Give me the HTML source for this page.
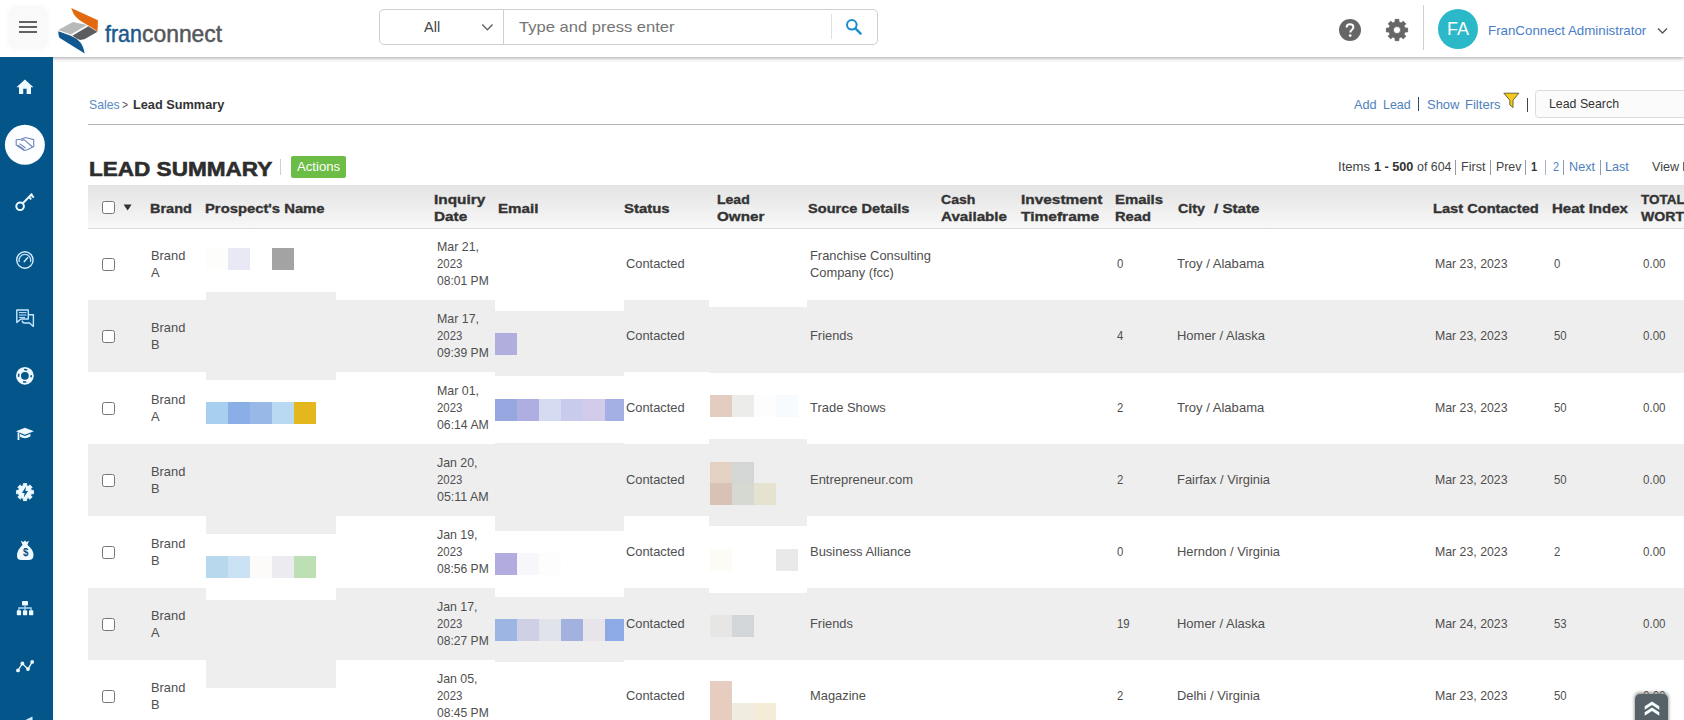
<!DOCTYPE html>
<html><head><meta charset="utf-8"><title>Lead Summary</title>
<style>
html,body{margin:0;padding:0;width:1684px;height:720px;overflow:hidden;}
body{width:1684px;height:720px;overflow:hidden;background:#fff;position:relative;font-family:"Liberation Sans",sans-serif;}
.t{position:absolute;white-space:nowrap;line-height:1;transform-origin:0 0;display:block;}
.r{position:absolute;}
svg{position:absolute;overflow:visible;}
.cb{position:absolute;width:11px;height:11px;border:1px solid #767676;border-radius:2.5px;background:#fff;}
#app{position:absolute;left:0;top:0;width:1684px;height:720px;overflow:hidden;background:#fff;}
</style></head><body><div id="app">
<div class="r" style="left:88px;top:300px;width:1596px;height:72px;background:#eeeeee;"></div>
<div class="r" style="left:88px;top:444px;width:1596px;height:72px;background:#eeeeee;"></div>
<div class="r" style="left:88px;top:588px;width:1596px;height:72px;background:#eeeeee;"></div>
<div class="r" style="left:709px;top:372px;width:975px;height:1px;background:#eeeeee;"></div>
<div class="r" style="left:206px;top:292px;width:130px;height:88px;background:#eeeeee;"></div>
<div class="r" style="left:206px;top:444px;width:130px;height:90px;background:#eeeeee;"></div>
<div class="r" style="left:206px;top:534px;width:130px;height:66px;background:#fff;"></div>
<div class="r" style="left:206px;top:600px;width:130px;height:88px;background:#eeeeee;"></div>
<div class="r" style="left:495px;top:300px;width:129px;height:11px;background:#fff;"></div>
<div class="r" style="left:495px;top:372px;width:129px;height:4px;background:#eeeeee;"></div>
<div class="r" style="left:495px;top:443px;width:129px;height:88px;background:#eeeeee;"></div>
<div class="r" style="left:495px;top:531px;width:129px;height:66px;background:#fff;"></div>
<div class="r" style="left:495px;top:660px;width:129px;height:2px;background:#eeeeee;"></div>
<div class="r" style="left:709px;top:300px;width:98px;height:7px;background:#fff;"></div>
<div class="r" style="left:709px;top:439px;width:98px;height:87px;background:#eeeeee;"></div>
<div class="r" style="left:709px;top:526px;width:98px;height:67px;background:#fff;"></div>
<div class="r" style="left:88px;top:185px;width:1596px;height:43px;background:linear-gradient(#e4e4e4,#ececec 45%,#f8f8f8);border-bottom:1px solid #dcdcdc"></div>
<div class="r" style="left:206px;top:248px;width:22px;height:22px;background:#fdfdfb;"></div>
<div class="r" style="left:228px;top:248px;width:22px;height:22px;background:#e8e9f4;"></div>
<div class="r" style="left:272px;top:248px;width:22px;height:22px;background:#a3a3a3;"></div>
<div class="r" style="left:206px;top:402px;width:22px;height:22px;background:#a9cff0;"></div>
<div class="r" style="left:228px;top:402px;width:22px;height:22px;background:#8aaee6;"></div>
<div class="r" style="left:250px;top:402px;width:22px;height:22px;background:#98b8e8;"></div>
<div class="r" style="left:272px;top:402px;width:22px;height:22px;background:#b9d8f1;"></div>
<div class="r" style="left:294px;top:402px;width:22px;height:22px;background:#e5b71e;"></div>
<div class="r" style="left:206px;top:556px;width:22px;height:22px;background:#b8d8ee;"></div>
<div class="r" style="left:228px;top:556px;width:22px;height:22px;background:#cbe2f5;"></div>
<div class="r" style="left:250px;top:556px;width:22px;height:22px;background:#fdfbfa;"></div>
<div class="r" style="left:272px;top:556px;width:22px;height:22px;background:#ebebf0;"></div>
<div class="r" style="left:294px;top:556px;width:22px;height:22px;background:#bce0b4;"></div>
<div class="r" style="left:495px;top:333px;width:22px;height:22px;background:#b1aede;"></div>
<div class="r" style="left:495px;top:399px;width:22px;height:22px;background:#96a6df;"></div>
<div class="r" style="left:517px;top:399px;width:22px;height:22px;background:#aeaee2;"></div>
<div class="r" style="left:539px;top:399px;width:22px;height:22px;background:#d5dcf2;"></div>
<div class="r" style="left:561px;top:399px;width:22px;height:22px;background:#c9cbec;"></div>
<div class="r" style="left:583px;top:399px;width:22px;height:22px;background:#d3cbea;"></div>
<div class="r" style="left:605px;top:399px;width:19px;height:22px;background:#a4b0e4;"></div>
<div class="r" style="left:495px;top:553px;width:22px;height:22px;background:#b1abe0;"></div>
<div class="r" style="left:517px;top:553px;width:22px;height:22px;background:#f7f6fb;"></div>
<div class="r" style="left:539px;top:553px;width:22px;height:22px;background:#fdfdfe;"></div>
<div class="r" style="left:495px;top:619px;width:22px;height:22px;background:#9db5e3;"></div>
<div class="r" style="left:517px;top:619px;width:22px;height:22px;background:#cfcfe6;"></div>
<div class="r" style="left:539px;top:619px;width:22px;height:22px;background:#e0e4ea;"></div>
<div class="r" style="left:561px;top:619px;width:22px;height:22px;background:#a3b1df;"></div>
<div class="r" style="left:583px;top:619px;width:22px;height:22px;background:#e7e5ea;"></div>
<div class="r" style="left:605px;top:619px;width:19px;height:22px;background:#8eaae6;"></div>
<div class="r" style="left:710px;top:395px;width:22px;height:22px;background:#e3cdc0;"></div>
<div class="r" style="left:732px;top:395px;width:22px;height:22px;background:#ececea;"></div>
<div class="r" style="left:754px;top:395px;width:22px;height:22px;background:#fdfdfd;"></div>
<div class="r" style="left:776px;top:395px;width:22px;height:22px;background:#f8fbfd;"></div>
<div class="r" style="left:710px;top:462px;width:22px;height:22px;background:#e3d2c4;"></div>
<div class="r" style="left:732px;top:462px;width:22px;height:22px;background:#d4d6d5;"></div>
<div class="r" style="left:710px;top:483px;width:22px;height:22px;background:#d8c1b5;"></div>
<div class="r" style="left:732px;top:483px;width:22px;height:22px;background:#d6d9d2;"></div>
<div class="r" style="left:754px;top:483px;width:22px;height:22px;background:#e5e2cf;"></div>
<div class="r" style="left:710px;top:549px;width:22px;height:22px;background:#fcfbf6;"></div>
<div class="r" style="left:776px;top:549px;width:22px;height:22px;background:#e9e9e9;"></div>
<div class="r" style="left:710px;top:615px;width:22px;height:22px;background:#e6e7e4;"></div>
<div class="r" style="left:732px;top:615px;width:22px;height:22px;background:#d2d6d9;"></div>
<div class="r" style="left:710px;top:681px;width:22px;height:22px;background:#e6cdbf;"></div>
<div class="r" style="left:710px;top:703px;width:22px;height:22px;background:#e6cdbf;"></div>
<div class="r" style="left:732px;top:703px;width:22px;height:22px;background:#f1ece0;"></div>
<div class="r" style="left:754px;top:703px;width:22px;height:22px;background:#f4ecd6;"></div>
<span class="t" style="left:149.50px;top:202.10px;font-size:13px;font-weight:700;color:#333;transform:scaleX(1.1130);-webkit-text-stroke:0.35px #333;">Brand</span>
<span class="t" style="left:204.50px;top:202.10px;font-size:13px;font-weight:700;color:#333;transform:scaleX(1.1385);-webkit-text-stroke:0.35px #333;">Prospect&#x27;s Name</span>
<span class="t" style="left:434.30px;top:193.30px;font-size:13px;font-weight:700;color:#333;transform:scaleX(1.1839);-webkit-text-stroke:0.35px #333;">Inquiry</span>
<span class="t" style="left:434.30px;top:210.00px;font-size:13px;font-weight:700;color:#333;transform:scaleX(1.1783);-webkit-text-stroke:0.35px #333;">Date</span>
<span class="t" style="left:498.20px;top:202.10px;font-size:13px;font-weight:700;color:#333;transform:scaleX(1.1648);-webkit-text-stroke:0.35px #333;">Email</span>
<span class="t" style="left:624.20px;top:202.10px;font-size:13px;font-weight:700;color:#333;transform:scaleX(1.1453);-webkit-text-stroke:0.35px #333;">Status</span>
<span class="t" style="left:717.30px;top:193.30px;font-size:13px;font-weight:700;color:#333;transform:scaleX(1.0778);-webkit-text-stroke:0.35px #333;">Lead</span>
<span class="t" style="left:717.30px;top:210.00px;font-size:13px;font-weight:700;color:#333;transform:scaleX(1.1693);-webkit-text-stroke:0.35px #333;">Owner</span>
<span class="t" style="left:808.30px;top:202.10px;font-size:13px;font-weight:700;color:#333;transform:scaleX(1.1228);-webkit-text-stroke:0.35px #333;">Source Details</span>
<span class="t" style="left:941.00px;top:193.30px;font-size:13px;font-weight:700;color:#333;transform:scaleX(1.0822);-webkit-text-stroke:0.35px #333;">Cash</span>
<span class="t" style="left:941.00px;top:210.00px;font-size:13px;font-weight:700;color:#333;transform:scaleX(1.1661);-webkit-text-stroke:0.35px #333;">Available</span>
<span class="t" style="left:1020.60px;top:193.30px;font-size:13px;font-weight:700;color:#333;transform:scaleX(1.1861);-webkit-text-stroke:0.35px #333;">Investment</span>
<span class="t" style="left:1020.60px;top:210.00px;font-size:13px;font-weight:700;color:#333;transform:scaleX(1.1937);-webkit-text-stroke:0.35px #333;">Timeframe</span>
<span class="t" style="left:1114.60px;top:193.30px;font-size:13px;font-weight:700;color:#333;transform:scaleX(1.1452);-webkit-text-stroke:0.35px #333;">Emails</span>
<span class="t" style="left:1114.60px;top:210.00px;font-size:13px;font-weight:700;color:#333;transform:scaleX(1.1294);-webkit-text-stroke:0.35px #333;">Read</span>
<span class="t" style="left:1178.00px;top:202.10px;font-size:13px;font-weight:700;color:#333;transform:scaleX(1.0994);-webkit-text-stroke:0.35px #333;">City</span>
<span class="t" style="left:1213.50px;top:202.10px;font-size:13px;font-weight:700;color:#333;transform:scaleX(1.1664);-webkit-text-stroke:0.35px #333;">/ State</span>
<span class="t" style="left:1433.00px;top:202.10px;font-size:13px;font-weight:700;color:#333;transform:scaleX(1.1258);-webkit-text-stroke:0.35px #333;">Last Contacted</span>
<span class="t" style="left:1551.80px;top:202.10px;font-size:13px;font-weight:700;color:#333;transform:scaleX(1.1546);-webkit-text-stroke:0.35px #333;">Heat Index</span>
<span class="t" style="left:1640.70px;top:193.30px;font-size:13px;font-weight:700;color:#333;transform:scaleX(1.0399);-webkit-text-stroke:0.35px #333;">TOTAL</span>
<span class="t" style="left:1640.70px;top:210.00px;font-size:13px;font-weight:700;color:#333;transform:scaleX(1.0856);-webkit-text-stroke:0.35px #333;">WORTH</span>
<div class="cb" style="left:102px;top:201px"></div>
<svg style="left:123px;top:204px" width="10" height="8"><path d="M0.6 0.4 L8.6 0.4 L4.6 6.6 Z" fill="#333"/></svg>
<div class="cb" style="left:102px;top:258px"></div>
<span class="t" style="left:150.70px;top:249.00px;font-size:13px;color:#4f4f4f;transform:scaleX(0.9900);">Brand</span>
<span class="t" style="left:150.70px;top:266.00px;font-size:13px;color:#4f4f4f;transform:scaleX(0.9900);">A</span>
<span class="t" style="left:436.50px;top:240.10px;font-size:13px;color:#4f4f4f;transform:scaleX(0.9523);">Mar 21,</span>
<span class="t" style="left:436.50px;top:257.10px;font-size:13px;color:#4f4f4f;transform:scaleX(0.8750);">2023</span>
<span class="t" style="left:436.50px;top:274.10px;font-size:13px;color:#4f4f4f;transform:scaleX(0.9302);">08:01 PM</span>
<span class="t" style="left:626.40px;top:257.40px;font-size:13px;color:#4f4f4f;transform:scaleX(0.9900);">Contacted</span>
<span class="t" style="left:810.00px;top:249.00px;font-size:13px;color:#4f4f4f;transform:scaleX(0.9900);">Franchise Consulting</span>
<span class="t" style="left:810.00px;top:266.20px;font-size:13px;color:#4f4f4f;transform:scaleX(0.9900);">Company (fcc)</span>
<span class="t" style="left:1116.50px;top:257.40px;font-size:13px;color:#4f4f4f;transform:scaleX(0.8750);">0</span>
<span class="t" style="left:1176.90px;top:257.40px;font-size:13px;color:#4f4f4f;transform:scaleX(1.0036);">Troy / Alabama</span>
<span class="t" style="left:1434.80px;top:257.40px;font-size:13px;color:#4f4f4f;transform:scaleX(0.9465);">Mar 23, 2023</span>
<span class="t" style="left:1553.60px;top:257.40px;font-size:13px;color:#4f4f4f;transform:scaleX(0.8750);">0</span>
<span class="t" style="left:1642.60px;top:257.40px;font-size:13px;color:#4f4f4f;transform:scaleX(0.8914);">0.00</span>
<div class="cb" style="left:102px;top:330px"></div>
<span class="t" style="left:150.70px;top:321.00px;font-size:13px;color:#4f4f4f;transform:scaleX(0.9900);">Brand</span>
<span class="t" style="left:150.70px;top:338.00px;font-size:13px;color:#4f4f4f;transform:scaleX(0.9900);">B</span>
<span class="t" style="left:436.50px;top:312.10px;font-size:13px;color:#4f4f4f;transform:scaleX(0.9523);">Mar 17,</span>
<span class="t" style="left:436.50px;top:329.10px;font-size:13px;color:#4f4f4f;transform:scaleX(0.8750);">2023</span>
<span class="t" style="left:436.50px;top:346.10px;font-size:13px;color:#4f4f4f;transform:scaleX(0.9302);">09:39 PM</span>
<span class="t" style="left:626.40px;top:329.40px;font-size:13px;color:#4f4f4f;transform:scaleX(0.9900);">Contacted</span>
<span class="t" style="left:810.00px;top:329.40px;font-size:13px;color:#4f4f4f;transform:scaleX(0.9900);">Friends</span>
<span class="t" style="left:1116.50px;top:329.40px;font-size:13px;color:#4f4f4f;transform:scaleX(0.8750);">4</span>
<span class="t" style="left:1176.90px;top:329.40px;font-size:13px;color:#4f4f4f;transform:scaleX(0.9981);">Homer / Alaska</span>
<span class="t" style="left:1434.80px;top:329.40px;font-size:13px;color:#4f4f4f;transform:scaleX(0.9465);">Mar 23, 2023</span>
<span class="t" style="left:1553.60px;top:329.40px;font-size:13px;color:#4f4f4f;transform:scaleX(0.8750);">50</span>
<span class="t" style="left:1642.60px;top:329.40px;font-size:13px;color:#4f4f4f;transform:scaleX(0.8914);">0.00</span>
<div class="cb" style="left:102px;top:402px"></div>
<span class="t" style="left:150.70px;top:393.00px;font-size:13px;color:#4f4f4f;transform:scaleX(0.9900);">Brand</span>
<span class="t" style="left:150.70px;top:410.00px;font-size:13px;color:#4f4f4f;transform:scaleX(0.9900);">A</span>
<span class="t" style="left:436.50px;top:384.10px;font-size:13px;color:#4f4f4f;transform:scaleX(0.9523);">Mar 01,</span>
<span class="t" style="left:436.50px;top:401.10px;font-size:13px;color:#4f4f4f;transform:scaleX(0.8750);">2023</span>
<span class="t" style="left:436.50px;top:418.10px;font-size:13px;color:#4f4f4f;transform:scaleX(0.9424);">06:14 AM</span>
<span class="t" style="left:626.40px;top:401.40px;font-size:13px;color:#4f4f4f;transform:scaleX(0.9900);">Contacted</span>
<span class="t" style="left:810.00px;top:401.40px;font-size:13px;color:#4f4f4f;transform:scaleX(0.9963);">Trade Shows</span>
<span class="t" style="left:1116.50px;top:401.40px;font-size:13px;color:#4f4f4f;transform:scaleX(0.8750);">2</span>
<span class="t" style="left:1176.90px;top:401.40px;font-size:13px;color:#4f4f4f;transform:scaleX(1.0036);">Troy / Alabama</span>
<span class="t" style="left:1434.80px;top:401.40px;font-size:13px;color:#4f4f4f;transform:scaleX(0.9465);">Mar 23, 2023</span>
<span class="t" style="left:1553.60px;top:401.40px;font-size:13px;color:#4f4f4f;transform:scaleX(0.8750);">50</span>
<span class="t" style="left:1642.60px;top:401.40px;font-size:13px;color:#4f4f4f;transform:scaleX(0.8914);">0.00</span>
<div class="cb" style="left:102px;top:474px"></div>
<span class="t" style="left:150.70px;top:465.00px;font-size:13px;color:#4f4f4f;transform:scaleX(0.9900);">Brand</span>
<span class="t" style="left:150.70px;top:482.00px;font-size:13px;color:#4f4f4f;transform:scaleX(0.9900);">B</span>
<span class="t" style="left:436.50px;top:456.10px;font-size:13px;color:#4f4f4f;transform:scaleX(0.9510);">Jan 20,</span>
<span class="t" style="left:436.50px;top:473.10px;font-size:13px;color:#4f4f4f;transform:scaleX(0.8750);">2023</span>
<span class="t" style="left:436.50px;top:490.10px;font-size:13px;color:#4f4f4f;transform:scaleX(0.9592);">05:11 AM</span>
<span class="t" style="left:626.40px;top:473.40px;font-size:13px;color:#4f4f4f;transform:scaleX(0.9900);">Contacted</span>
<span class="t" style="left:810.00px;top:473.40px;font-size:13px;color:#4f4f4f;transform:scaleX(0.9969);">Entrepreneur.com</span>
<span class="t" style="left:1116.50px;top:473.40px;font-size:13px;color:#4f4f4f;transform:scaleX(0.8750);">2</span>
<span class="t" style="left:1176.90px;top:473.40px;font-size:13px;color:#4f4f4f;transform:scaleX(0.9925);">Fairfax / Virginia</span>
<span class="t" style="left:1434.80px;top:473.40px;font-size:13px;color:#4f4f4f;transform:scaleX(0.9465);">Mar 23, 2023</span>
<span class="t" style="left:1553.60px;top:473.40px;font-size:13px;color:#4f4f4f;transform:scaleX(0.8750);">50</span>
<span class="t" style="left:1642.60px;top:473.40px;font-size:13px;color:#4f4f4f;transform:scaleX(0.8914);">0.00</span>
<div class="cb" style="left:102px;top:546px"></div>
<span class="t" style="left:150.70px;top:537.00px;font-size:13px;color:#4f4f4f;transform:scaleX(0.9900);">Brand</span>
<span class="t" style="left:150.70px;top:554.00px;font-size:13px;color:#4f4f4f;transform:scaleX(0.9900);">B</span>
<span class="t" style="left:436.50px;top:528.10px;font-size:13px;color:#4f4f4f;transform:scaleX(0.9510);">Jan 19,</span>
<span class="t" style="left:436.50px;top:545.10px;font-size:13px;color:#4f4f4f;transform:scaleX(0.8750);">2023</span>
<span class="t" style="left:436.50px;top:562.10px;font-size:13px;color:#4f4f4f;transform:scaleX(0.9302);">08:56 PM</span>
<span class="t" style="left:626.40px;top:545.40px;font-size:13px;color:#4f4f4f;transform:scaleX(0.9900);">Contacted</span>
<span class="t" style="left:810.00px;top:545.40px;font-size:13px;color:#4f4f4f;transform:scaleX(0.9970);">Business Alliance</span>
<span class="t" style="left:1116.50px;top:545.40px;font-size:13px;color:#4f4f4f;transform:scaleX(0.8750);">0</span>
<span class="t" style="left:1176.90px;top:545.40px;font-size:13px;color:#4f4f4f;transform:scaleX(0.9922);">Herndon / Virginia</span>
<span class="t" style="left:1434.80px;top:545.40px;font-size:13px;color:#4f4f4f;transform:scaleX(0.9465);">Mar 23, 2023</span>
<span class="t" style="left:1553.60px;top:545.40px;font-size:13px;color:#4f4f4f;transform:scaleX(0.8750);">2</span>
<span class="t" style="left:1642.60px;top:545.40px;font-size:13px;color:#4f4f4f;transform:scaleX(0.8914);">0.00</span>
<div class="cb" style="left:102px;top:618px"></div>
<span class="t" style="left:150.70px;top:609.00px;font-size:13px;color:#4f4f4f;transform:scaleX(0.9900);">Brand</span>
<span class="t" style="left:150.70px;top:626.00px;font-size:13px;color:#4f4f4f;transform:scaleX(0.9900);">A</span>
<span class="t" style="left:436.50px;top:600.10px;font-size:13px;color:#4f4f4f;transform:scaleX(0.9510);">Jan 17,</span>
<span class="t" style="left:436.50px;top:617.10px;font-size:13px;color:#4f4f4f;transform:scaleX(0.8750);">2023</span>
<span class="t" style="left:436.50px;top:634.10px;font-size:13px;color:#4f4f4f;transform:scaleX(0.9302);">08:27 PM</span>
<span class="t" style="left:626.40px;top:617.40px;font-size:13px;color:#4f4f4f;transform:scaleX(0.9900);">Contacted</span>
<span class="t" style="left:810.00px;top:617.40px;font-size:13px;color:#4f4f4f;transform:scaleX(0.9900);">Friends</span>
<span class="t" style="left:1116.50px;top:617.40px;font-size:13px;color:#4f4f4f;transform:scaleX(0.8750);">19</span>
<span class="t" style="left:1176.90px;top:617.40px;font-size:13px;color:#4f4f4f;transform:scaleX(0.9981);">Homer / Alaska</span>
<span class="t" style="left:1434.80px;top:617.40px;font-size:13px;color:#4f4f4f;transform:scaleX(0.9465);">Mar 24, 2023</span>
<span class="t" style="left:1553.60px;top:617.40px;font-size:13px;color:#4f4f4f;transform:scaleX(0.8750);">53</span>
<span class="t" style="left:1642.60px;top:617.40px;font-size:13px;color:#4f4f4f;transform:scaleX(0.8914);">0.00</span>
<div class="cb" style="left:102px;top:690px"></div>
<span class="t" style="left:150.70px;top:681.00px;font-size:13px;color:#4f4f4f;transform:scaleX(0.9900);">Brand</span>
<span class="t" style="left:150.70px;top:698.00px;font-size:13px;color:#4f4f4f;transform:scaleX(0.9900);">B</span>
<span class="t" style="left:436.50px;top:672.10px;font-size:13px;color:#4f4f4f;transform:scaleX(0.9510);">Jan 05,</span>
<span class="t" style="left:436.50px;top:689.10px;font-size:13px;color:#4f4f4f;transform:scaleX(0.8750);">2023</span>
<span class="t" style="left:436.50px;top:706.10px;font-size:13px;color:#4f4f4f;transform:scaleX(0.9302);">08:45 PM</span>
<span class="t" style="left:626.40px;top:689.40px;font-size:13px;color:#4f4f4f;transform:scaleX(0.9900);">Contacted</span>
<span class="t" style="left:810.00px;top:689.40px;font-size:13px;color:#4f4f4f;transform:scaleX(0.9900);">Magazine</span>
<span class="t" style="left:1116.50px;top:689.40px;font-size:13px;color:#4f4f4f;transform:scaleX(0.8750);">2</span>
<span class="t" style="left:1176.90px;top:689.40px;font-size:13px;color:#4f4f4f;transform:scaleX(0.9928);">Delhi / Virginia</span>
<span class="t" style="left:1434.80px;top:689.40px;font-size:13px;color:#4f4f4f;transform:scaleX(0.9465);">Mar 23, 2023</span>
<span class="t" style="left:1553.60px;top:689.40px;font-size:13px;color:#4f4f4f;transform:scaleX(0.8750);">50</span>
<span class="t" style="left:1642.60px;top:689.40px;font-size:13px;color:#4f4f4f;transform:scaleX(0.8914);">0.00</span>
<span class="t" style="left:88.80px;top:158.02px;font-size:21px;font-weight:700;color:#2d2d2d;transform:scaleX(1.0731);-webkit-text-stroke:0.6px #2d2d2d;">LEAD SUMMARY</span>
<div class="r" style="left:280px;top:159px;width:1px;height:16px;background:#d0d0d0;"></div>
<div class="r" style="left:291px;top:156px;width:55px;height:22px;background:#6cbd45;border-radius:2px"></div>
<span class="t" style="left:296.80px;top:159.87px;font-size:13.5px;color:#fff;transform:scaleX(0.9758);">Actions</span>
<span class="t" style="left:1337.60px;top:160.00px;font-size:13px;color:#444;transform:scaleX(1.0100);">Items</span>
<span class="t" style="left:1373.60px;top:160.00px;font-size:13px;font-weight:700;color:#333;transform:scaleX(0.9736);">1 - 500</span>
<span class="t" style="left:1416.60px;top:160.00px;font-size:13px;color:#444;transform:scaleX(0.9519);">of 604</span>
<div class="r" style="left:1455.3px;top:160px;width:1px;height:15px;background:#999;"></div>
<div class="r" style="left:1490.3px;top:160px;width:1px;height:15px;background:#999;"></div>
<div class="r" style="left:1525px;top:160px;width:1px;height:15px;background:#999;"></div>
<span class="t" style="left:1461.20px;top:160.00px;font-size:13px;color:#444;transform:scaleX(0.9656);">First</span>
<span class="t" style="left:1495.60px;top:160.00px;font-size:13px;color:#444;transform:scaleX(0.9503);">Prev</span>
<span class="t" style="left:1530.80px;top:160.00px;font-size:13px;font-weight:700;color:#333;transform:scaleX(0.8438);">1</span>
<div class="r" style="left:1545px;top:160px;width:1px;height:15px;background:#a9b3c4;"></div>
<div class="r" style="left:1563.4px;top:160px;width:1px;height:15px;background:#8a9bb8;"></div>
<div class="r" style="left:1599.5px;top:160px;width:1px;height:15px;background:#8a9bb8;"></div>
<span class="t" style="left:1552.90px;top:160.00px;font-size:13px;color:#4f81bd;transform:scaleX(0.8438);">2</span>
<span class="t" style="left:1569.00px;top:160.00px;font-size:13px;color:#4f81bd;transform:scaleX(0.9727);">Next</span>
<span class="t" style="left:1605.00px;top:160.00px;font-size:13px;color:#4f81bd;transform:scaleX(0.9687);">Last</span>
<span class="t" style="left:1651.90px;top:160.00px;font-size:13px;color:#444;transform:scaleX(0.9699);">View</span>
<div class="r" style="left:1682.6px;top:161.5px;width:1.4px;height:9.5px;background:#6b6b4a;"></div>
<span class="t" style="left:88.60px;top:98.40px;font-size:13px;color:#5a8abf;transform:scaleX(0.9410);">Sales</span>
<span class="t" style="left:122.00px;top:98.64px;font-size:12px;color:#555;transform:scaleX(0.8561);">&gt;</span>
<span class="t" style="left:132.50px;top:97.80px;font-size:13px;font-weight:700;color:#333;transform:scaleX(0.9796);">Lead Summary</span>
<div class="r" style="left:88px;top:124px;width:1596px;height:1px;background:#b5b5b5;"></div>
<span class="t" style="left:1354.00px;top:97.57px;font-size:13.5px;color:#4f81bd;transform:scaleX(0.9367);">Add</span>
<span class="t" style="left:1383.00px;top:97.57px;font-size:13.5px;color:#4f81bd;transform:scaleX(0.9191);">Lead</span>
<div class="r" style="left:1417.5px;top:97px;width:1.5px;height:14px;background:#2d4a7a;"></div>
<span class="t" style="left:1426.60px;top:97.57px;font-size:13.5px;color:#4f81bd;transform:scaleX(0.9595);">Show</span>
<span class="t" style="left:1464.50px;top:97.57px;font-size:13.5px;color:#4f81bd;transform:scaleX(0.9661);">Filters</span>
<svg style="left:1503px;top:92px" width="17" height="18" viewBox="0 0 17 18"><path d="M0.8 1.2 H15.8 L10 8.2 V15.6 L6.8 13 V8.2 Z" fill="#f7c81e" stroke="#5b5a2a" stroke-width="0.9" stroke-linejoin="round"/></svg>
<div class="r" style="left:1526.5px;top:98px;width:1.5px;height:14px;background:#444;"></div>
<div class="r" style="left:1535px;top:90px;width:170px;height:26px;border:1px solid #dcdcdc;border-radius:4px;background:#fbfbfb"></div>
<span class="t" style="left:1549.30px;top:96.67px;font-size:13.5px;color:#333;transform:scaleX(0.9144);">Lead Search</span>
<div class="r" style="left:0;top:0;width:1684px;height:57px;background:#fff;box-shadow:0 1px 4px rgba(0,0,0,.38)"></div>
<div class="r" style="left:9px;top:7px;width:38px;height:41px;border-radius:8px;background:#f9f9f9;box-shadow:0 0 4px 2px #f9f9f9"></div>
<div class="r" style="left:19px;top:21px;width:18px;height:2px;background:#626262;"></div>
<div class="r" style="left:19px;top:26px;width:18px;height:2px;background:#626262;"></div>
<div class="r" style="left:19px;top:31px;width:18px;height:2px;background:#626262;"></div>
<svg style="left:56px;top:6px" width="46" height="50" viewBox="56 6 46 50">
<path d="M71.2 7.9 L97.9 20.2 L97.6 31.3 L87.4 25 Q77 19.6 74 14.6 Q72.6 11.6 71.2 7.9 Z" fill="#e2690e"/>
<polygon points="58.3,30 72.8,21.9 87,25 70.9,34.4" fill="#b7bab8"/>
<polygon points="72.4,35.7 88.3,26.3 97.5,31.8 84.4,39.2 80,40 76.6,38.4" fill="#5b5d60"/>
<path d="M58.3 31.2 L70.8 35.8 Q77 38.4 80.4 42.4 Q83.6 46.6 84.7 53.5 L59.4 37.8 Q58.2 35 58.3 31.2 Z" fill="#10588f"/>
</svg>
<span class="t" style="left:104.70px;top:22.18px;font-size:24px;color:#1b5a8c;transform:scaleX(0.8899);-webkit-text-stroke:0.5px #1b5a8c;">fran</span>
<span class="t" style="left:141.50px;top:22.18px;font-size:24px;color:#55575a;transform:scaleX(0.9530);-webkit-text-stroke:0.5px #55575a;">connect</span>
<div class="r" style="left:378.5px;top:8.7px;width:497px;height:34.5px;border:1.5px solid #cfcfcf;border-radius:5px;background:#fff"></div>
<div class="r" style="left:502.5px;top:10px;width:1.5px;height:34px;background:#cfcfcf;"></div>
<span class="t" style="left:424.10px;top:19.30px;font-size:15px;color:#444;transform:scaleX(0.9657);">All</span>
<svg style="left:481px;top:23px" width="13" height="9"><path d="M1.2 1.5 L6.4 6.8 L11.6 1.5" fill="none" stroke="#666" stroke-width="1.5"/></svg>
<span class="t" style="left:519.30px;top:19.30px;font-size:15px;color:#757575;transform:scaleX(1.1036);">Type and press enter</span>
<div class="r" style="left:831px;top:14px;width:1px;height:25px;background:#e0e0e0;"></div>
<svg style="left:845px;top:18px" width="18" height="18" viewBox="0 0 18 18"><circle cx="6.8" cy="6.8" r="4.8" fill="none" stroke="#1b8ccf" stroke-width="2"/><path d="M10.4 10.4 L15.6 15.6" stroke="#1b8ccf" stroke-width="2.4" stroke-linecap="round"/></svg>
<svg style="left:1339px;top:19px" width="22" height="22" viewBox="0 0 22 22"><circle cx="11" cy="11" r="11" fill="#666"/><path d="M7.6 8.6 C7.6 6.3 9.2 5.2 11 5.2 C12.9 5.2 14.4 6.4 14.4 8.2 C14.4 10.6 11.3 10.8 11.3 13.4" fill="none" stroke="#fff" stroke-width="2"/><circle cx="11.2" cy="16.6" r="1.35" fill="#fff"/></svg>
<svg style="left:0;top:0" width="1684" height="60"><path d="M1395.10 19.37 L1398.90 19.37 L1398.99 22.05 L1401.22 22.97 L1403.18 21.14 L1405.86 23.82 L1404.03 25.78 L1404.95 28.01 L1407.63 28.10 L1407.63 31.90 L1404.95 31.99 L1404.03 34.22 L1405.86 36.18 L1403.18 38.86 L1401.22 37.03 L1398.99 37.95 L1398.90 40.63 L1395.10 40.63 L1395.01 37.95 L1392.78 37.03 L1390.82 38.86 L1388.14 36.18 L1389.97 34.22 L1389.05 31.99 L1386.37 31.90 L1386.37 28.10 L1389.05 28.01 L1389.97 25.78 L1388.14 23.82 L1390.82 21.14 L1392.78 22.97 L1395.01 22.05 Z M1393.40 30.00 a3.6 3.6 0 1 0 7.2 0 a3.6 3.6 0 1 0 -7.2 0 Z" fill="#666" fill-rule="evenodd" stroke="#666" stroke-width="0.8" stroke-linejoin="round"/></svg>
<div class="r" style="left:1423px;top:5px;width:1px;height:45px;background:#cfcfcf;"></div>
<div class="r" style="left:1438px;top:9px;width:40px;height:40px;border-radius:50%;background:#2bb9c9"></div>
<span class="t" style="left:1447.00px;top:20.06px;font-size:18px;color:#fff;transform:scaleX(0.9996);">FA</span>
<span class="t" style="left:1487.70px;top:23.87px;font-size:13.5px;color:#4a7dc7;transform:scaleX(0.9859);">FranConnect Administrator</span>
<svg style="left:1657px;top:27px" width="11" height="8"><path d="M1 1.4 L5.5 5.9 L10 1.4" fill="none" stroke="#555" stroke-width="1.4"/></svg>
<div class="r" style="left:0px;top:57px;width:53px;height:663px;background:#03558a;"></div>
<svg style="left:0;top:0" width="54" height="720" viewBox="0 0 54 720"><path d="M24.9 79.4 L33.4 87.2 L31 87.2 L31 94 L26.6 94 L26.6 88.8 L23.2 88.8 L23.2 94 L19 94 L19 87.2 L16.5 87.2 Z" fill="#eefaff"/><circle cx="24.9" cy="144.8" r="20" fill="#fdfeff"/><path d="M16.2 139.8 L20.5 139.2 L25.6 137.5 L33.6 139.6 L33.8 146.6 L27.4 149.8 L24.2 150.4 L16.2 145 Z M21 140.5 L24 139.6 L32.6 147 M18 145.2 L24 149.4 M19.6 143.6 L25.5 148" fill="none" stroke="#7088bd" stroke-width="1.15" stroke-linejoin="round"/><circle cx="20.1" cy="206.3" r="3.8" fill="none" stroke="#eefaff" stroke-width="2"/><path d="M22.9 203.3 L32.2 193.6 M29.4 197.4 L31.2 199.4 M31.6 195.2 L33.8 197.6" stroke="#eefaff" stroke-width="2" stroke-linecap="butt"/><circle cx="24.9" cy="260" r="8.2" fill="none" stroke="#d4ecff" stroke-width="1.4"/><path d="M19.4 262 A5.8 5.8 0 1 1 30.4 262" fill="none" stroke="#bfe0fb" stroke-width="1.3"/><path d="M24.3 261.6 L27.6 257.8" stroke="#d4ecff" stroke-width="1.5" stroke-linecap="round"/><path d="M16.8 310 H28.3 V319 H21 L16.8 322.4 Z" fill="none" stroke="#c4e6ff" stroke-width="1.4" stroke-linejoin="round"/><path d="M19 312.6 H26.5 M19 315 H26.5 M19 317.4 H25" stroke="#c4e6ff" stroke-width="1"/><path d="M29 314.8 H33.4 V326.4 L29.6 323 H24.5 Q22.4 323 22.2 320.6" fill="none" stroke="#c4e6ff" stroke-width="1.4" stroke-linejoin="round"/><circle cx="24.9" cy="375.8" r="6.4" fill="none" stroke="#eefaff" stroke-width="5"/><circle cx="24.9" cy="375.8" r="6.3" fill="none" stroke="#03558a" stroke-width="1.5" stroke-dasharray="3.4 6.5" stroke-dashoffset="1.7"/><path d="M24.9 427.8 L33.9 431.2 L24.9 434.8 L16 431.3 Z" fill="#eefaff"/><path d="M20 434 L24.9 436 L30.4 433.8 L30.4 436.6 Q25 439.8 20 436.8 Z" fill="#eefaff"/><path d="M18.5 432.4 V440" stroke="#eefaff" stroke-width="1.8"/><path d="M23.32 483.56 L26.68 483.56 L26.76 485.74 L28.25 486.36 L29.85 484.88 L32.22 487.25 L30.74 488.85 L31.36 490.34 L33.54 490.42 L33.54 493.78 L31.36 493.86 L30.74 495.35 L32.22 496.95 L29.85 499.32 L28.25 497.84 L26.76 498.46 L26.68 500.64 L23.32 500.64 L23.24 498.46 L21.75 497.84 L20.15 499.32 L17.78 496.95 L19.26 495.35 L18.64 493.86 L16.46 493.78 L16.46 490.42 L18.64 490.34 L19.26 488.85 L17.78 487.25 L20.15 484.88 L21.75 486.36 L23.24 485.74 Z" fill="#eefaff" fill-rule="evenodd" stroke="#eefaff" stroke-width="0.8" stroke-linejoin="round"/><path d="M26 486.6 L22 493 L24.6 493 L23.8 497.6 L28 491 L25.4 491 Z" fill="#03558a"/><path d="M20.8 540.8 L23.4 542 L25 540.6 L26.6 542 L29 540.8 L27.4 545 Q33.6 549.5 33.5 555.5 Q33.4 560 28.5 560 H21.5 Q16.8 560 17 555.5 Q17.2 549.5 22.6 545 Z" fill="#eefaff"/><rect x="22" y="601" width="6" height="4.6" rx="0.8" fill="#eefaff"/><path d="M25 605.6 V610 M18.9 610.4 V608 H31.1 V610.4" fill="none" stroke="#a8d7f5" stroke-width="1.3"/><rect x="16.8" y="610.2" width="4.3" height="5" rx="0.8" fill="#eefaff"/><rect x="22.9" y="610.2" width="4.3" height="5" rx="0.8" fill="#eefaff"/><rect x="29" y="610.2" width="4.3" height="5" rx="0.8" fill="#eefaff"/><path d="M18 670.4 L22.4 663.5 L28 669.1 L32.2 661.9" fill="none" stroke="#eefaff" stroke-width="1.3"/><circle cx="18" cy="670.4" r="1.9" fill="#eefaff"/><circle cx="22.4" cy="663.5" r="1.9" fill="#eefaff"/><circle cx="28" cy="669.1" r="1.9" fill="#eefaff"/><circle cx="32.2" cy="661.9" r="1.9" fill="#eefaff"/><path d="M25.5 720 L32.4 716.4 L32.6 720 Z" fill="#cfeaff"/></svg>
<span class="t" style="left:22.60px;top:547.29px;font-size:11px;font-weight:700;color:#0b4a78;transform:scaleX(0.8828);">$</span>
<div class="r" style="left:1635.4px;top:694px;width:32.6px;height:30px;background:#566267;border-radius:5px 5px 0 0;box-shadow:0 -1px 3px 1px rgba(110,110,110,.6)"></div>
<svg style="left:0;top:0" width="1684" height="720"><path d="M1652 701.6 L1659.3 706.3000000000001 L1659.3 709.7 L1652 705.1 L1644.7 709.7 L1644.7 706.3000000000001 Z M1652 707.6 L1659.3 712.3000000000001 L1659.3 715.7 L1652 711.1 L1644.7 715.7 L1644.7 712.3000000000001 Z" fill="#f4fbfd"/></svg>
</div></body></html>
